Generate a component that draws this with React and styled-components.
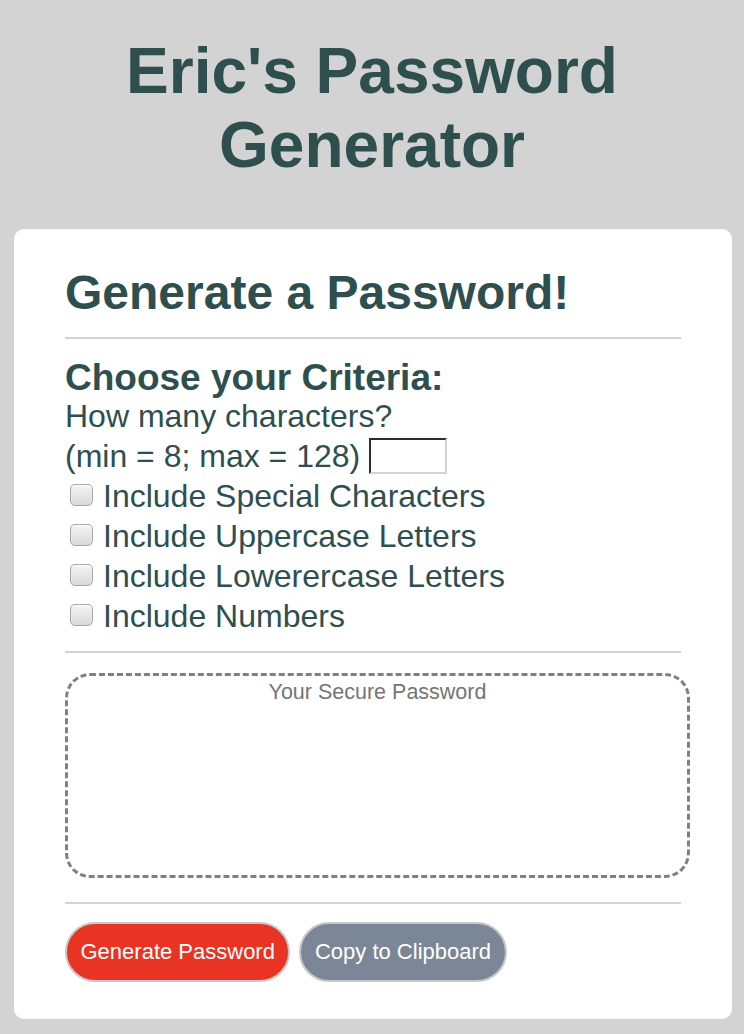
import styled, { createGlobalStyle } from 'styled-components'

const GlobalStyle = createGlobalStyle`
	body {
		margin: 0;
		background: #d3d3d3;
		font-family: 'Liberation Sans', Arial, sans-serif;
		color: #2f4f4f;
	}
`

const criteria = [
	'Include Special Characters',
	'Include Uppercase Letters',
	'Include Lowerercase Letters',
	'Include Numbers',
]

export default function App() {
	return (
		<>
			<GlobalStyle />
			<Header>
				<Title>
					Eric's Password
					<br /> Generator
				</Title>
			</Header>
			<Card>
				<CardTitle>Generate a Password!</CardTitle>
				<Divider $top={17} $bottom={21} />
				<Criteria>
					<CriteriaTitle>Choose your Criteria:</CriteriaTitle>
					<Line>How many characters?</Line>
					<Line>
						(min = 8; max = 128)
						<LengthInput type='number' />
					</Line>
					{criteria.map((label) => (
						<CheckRow key={label}>
							<Check type='checkbox' />
							{label}
						</CheckRow>
					))}
				</Criteria>
				<Divider $top={15} $bottom={20} />
				<Output placeholder='Your Secure Password' readOnly />
				<Divider $top={24} $bottom={18} />
				<Buttons>
					<Button $bg='#e93323'>Generate Password</Button>
					<Button $bg='#7b8797'>Copy to Clipboard</Button>
				</Buttons>
			</Card>
		</>
	)
}

const Header = styled.header`
	padding: 34px 0 47px;
	text-align: center;
`
const Title = styled.h1`
	margin: 0;
	font-size: 64px;
	line-height: 74px;
	font-weight: 700;
	color: #2f4f4f;
`
const Card = styled.main`
	margin: 0 12px 16px 14px;
	padding: 36px 51px 37px;
	background: #fff;
	border-radius: 10px;
`
const CardTitle = styled.h2`
	margin: 0;
	font-size: 48px;
	line-height: 55px;
	font-weight: 700;
`
const Divider = styled.hr`
	margin: ${(p) => p.$top}px 0 ${(p) => p.$bottom}px;
	border: 0;
	border-top: 2px solid #d3d3d3;
`
const Criteria = styled.section`
	display: flex;
	flex-direction: column;
	font-size: 32px;
`
const CriteriaTitle = styled.h3`
	margin: 0;
	font-size: 37px;
	line-height: 36px;
	font-weight: 700;
`
const Line = styled.div`
	line-height: 40px;
	display: flex;
	align-items: center;
	gap: 9px;
	white-space: pre;
`
const LengthInput = styled.input`
	box-sizing: border-box;
	width: 78px;
	height: 36px;
	border: 2px inset #d3d3d3;
	border-top-color: #808080;
	border-left-color: #808080;
	background: #fff;
	-moz-appearance: textfield;
	&::-webkit-inner-spin-button {
		display: none;
	}
`
const CheckRow = styled.label`
	display: flex;
	align-items: center;
	gap: 10px;
	height: 40px;
`
const Check = styled.input`
	appearance: none;
	box-sizing: border-box;
	width: 23px;
	height: 22px;
	margin: 0 0 2px 5px;
	border: 1px solid #a6a6a6;
	border-radius: 5px;
	background: linear-gradient(#f4f4f4, #d9d9d9);
	box-shadow: inset 0 1px 1px #fff;
`
const Output = styled.textarea`
	display: block;
	box-sizing: border-box;
	width: calc(100% + 9px);
	height: 205px;
	padding: 4px;
	border: 3px dashed #808080;
	border-radius: 25px;
	font-family: 'Liberation Sans', Arial, sans-serif;
	font-size: 21.5px;
	text-align: center;
	resize: none;
	outline: none;
	&::placeholder {
		color: #757575;
	}
`
const Buttons = styled.div`
	display: flex;
	gap: 9px;
`
const Button = styled.button`
	padding: 15px 13.5px;
	border: 2px solid #c8c8c8;
	border-radius: 30px;
	background: ${(p) => p.$bg};
	color: #fff;
	font-family: 'Liberation Sans', Arial, sans-serif;
	font-size: 22px;
	line-height: 26px;
`
